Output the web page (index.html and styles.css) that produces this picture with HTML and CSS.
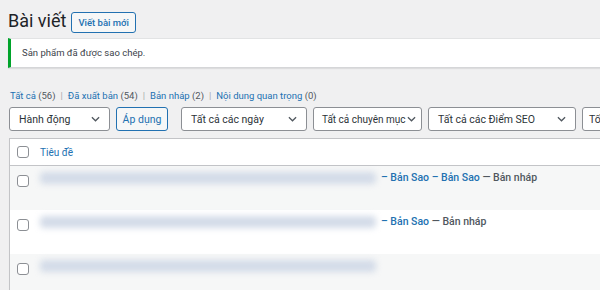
FILE: index.html
```html
<!DOCTYPE html>
<html lang="vi">
<head>
<meta charset="utf-8">
<title>Bài viết</title>
<link rel="stylesheet" href="styles.css">
</head>
<body>
<div class="wrap">
  <div class="head">
    <h1 class="title">Bài viết</h1>
    <a class="add-new">Viết bài mới</a>
  </div>
  <div class="notice">Sản phẩm đã được sao chép.</div>
  <ul class="subsub">
    <li><a>Tất cả</a> <span class="count">(56)</span><span class="sep">|</span></li>
    <li><a>Đã xuất bản</a> <span class="count">(54)</span><span class="sep">|</span></li>
    <li><a>Bản nháp</a> <span class="count">(2)</span><span class="sep">|</span></li>
    <li><a>Nội dung quan trọng</a> <span class="count">(0)</span></li>
  </ul>
  <div class="filters">
    <div class="sel w1"><span>Hành động</span><svg class="chev" viewBox="0 0 10 6"><path d="M1 1l4 4 4-4"/></svg></div>
    <a class="btn">Áp dụng</a>
    <div class="sel w2 gap"><span>Tất cả các ngày</span><svg class="chev" viewBox="0 0 10 6"><path d="M1 1l4 4 4-4"/></svg></div>
    <div class="sel w3"><span>Tất cả chuyên mục</span><svg class="chev" viewBox="0 0 10 6"><path d="M1 1l4 4 4-4"/></svg></div>
    <div class="sel w4"><span>Tất cả các Điểm SEO</span><svg class="chev" viewBox="0 0 10 6"><path d="M1 1l4 4 4-4"/></svg></div>
    <div class="sel w5"><span>Tốn</span></div>
  </div>
  <div class="table">
    <div class="row thead">
      <span class="cb"></span>
      <a class="col-title">Tiêu đề</a>
    </div>
    <div class="row alt">
      <span class="cb"></span>
      <div class="line"><span class="blur"></span><span class="suffix"><a>– Bản Sao – Bản Sao</a> — Bản nháp</span></div>
    </div>
    <div class="row">
      <span class="cb"></span>
      <div class="line"><span class="blur"></span><span class="suffix"><a>– Bản Sao</a> — Bản nháp</span></div>
    </div>
    <div class="row alt">
      <span class="cb"></span>
      <div class="line"><span class="blur"></span></div>
    </div>
  </div>
</div>
</body>
</html>
```
FILE: styles.css
```css
html, body {
  margin: 0;
  padding: 0;
  overflow: hidden;
  background: #f0f0f1;
}
body {
  font-family: Roboto, "Noto Sans", sans-serif;
  color: #3c434a;
  width: 600px;
  height: 290px;
}
a { color: #2271b1; text-decoration: none; }
.wrap {
  padding-left: 8px;
  width: 720px;
}
.head {
  display: flex;
  align-items: center;
  gap: 5px;
  height: 44px;
}
.title {
  margin: 0;
  font-weight: 400;
  font-size: 18px;
  color: #1d2327;
  line-height: 24px;
  margin-top: -2px;
}
.add-new {
  border: 1px solid #2271b1;
  border-radius: 3px;
  font-size: 9.5px;
  font-weight: 500;
  padding: 0 6px;
  height: 19px;
  line-height: 19px;
  background: #f6f7f7;
}
.notice {
  margin-top: -6px;
  height: 30px;
  box-sizing: border-box;
  background: #fff;
  border-left: 3px solid #00a32a;
  box-shadow: 0 1px 1px rgba(0,0,0,.08);
  border-top: 1px solid #e2e3e4;
  border-bottom: 1px solid #d5d6d8;
  font-size: 9.5px;
  line-height: 28px;
  padding-left: 11px;
}
.subsub {
  list-style: none;
  margin: 0;
  padding: 0 0 0 2px;
  display: flex;
  font-size: 9.5px;
  height: 18px;
  line-height: 18px;
  margin-top: 19px;
  color: #50575e;
}
.subsub li { white-space: nowrap; }
.subsub .sep { margin: 0 5px; color: #a7aaad; }
.filters {
  display: flex;
  margin-top: 2px;
  height: 24px;
  gap: 6px;
}
.sel {
  box-sizing: border-box;
  height: 24px;
  border: 1px solid #8c8f94;
  border-radius: 3px;
  background: #fff;
  display: flex;
  align-items: center;
  justify-content: space-between;
  padding: 0 9px 0 9px;
  font-size: 10.5px;
  color: #2c3338;
  white-space: nowrap;
  flex: none;
}
.sel.w1 { width: 101px; margin-left: 1px; }
.sel.gap { margin-left: 7px; }
.sel.w2 { width: 126px; }
.sel.w3 { width: 109px; padding: 0 5px 0 8px; font-size: 10px; }
.sel.w4 { width: 148px; }
.sel.w5 { width: 60px; padding-left: 6px; }
.chev { width: 9px; height: 6px; fill: none; stroke: #50575e; stroke-width: 1.4; flex: none; }
.btn {
  box-sizing: border-box;
  height: 24px;
  width: 52px;
  border: 1px solid #2271b1;
  border-radius: 3px;
  background: #f6f7f7;
  font-size: 10.5px;
  display: flex;
  align-items: center;
  justify-content: center;
  flex: none;
}
.table {
  margin-top: 7px;
  margin-left: 1px;
  border: 1px solid #c3c4c7;
  background: #fff;
  box-shadow: 0 1px 1px rgba(0,0,0,.04);
}
.row {
  display: flex;
  align-items: flex-start;
  height: 44px;
  padding-left: 7px;
}
.row.alt { background: #f6f7f7; }
.thead {
  height: 26px;
  align-items: center;
  border-bottom: 1px solid #c3c4c7;
}
.cb {
  box-sizing: border-box;
  width: 12px;
  height: 12px;
  border: 1px solid #8c8f94;
  border-radius: 3px;
  background: #fff;
  flex: none;
  margin-top: 9px;
}
.thead .cb { margin-top: 0; }
.col-title {
  font-size: 10px;
  margin-left: 11px;
}
.line {
  display: flex;
  align-items: center;
  margin-left: 11px;
  margin-top: 3px;
  height: 17px;
}
.blur {
  width: 336px;
  height: 12px;
  background: #d3dbe8;
  filter: blur(3px);
  border-radius: 4px;
}
.suffix {
  font-size: 10.5px;
  font-weight: 500;
  color: #50575e;
  margin-left: 5px;
  white-space: nowrap;
}
```
